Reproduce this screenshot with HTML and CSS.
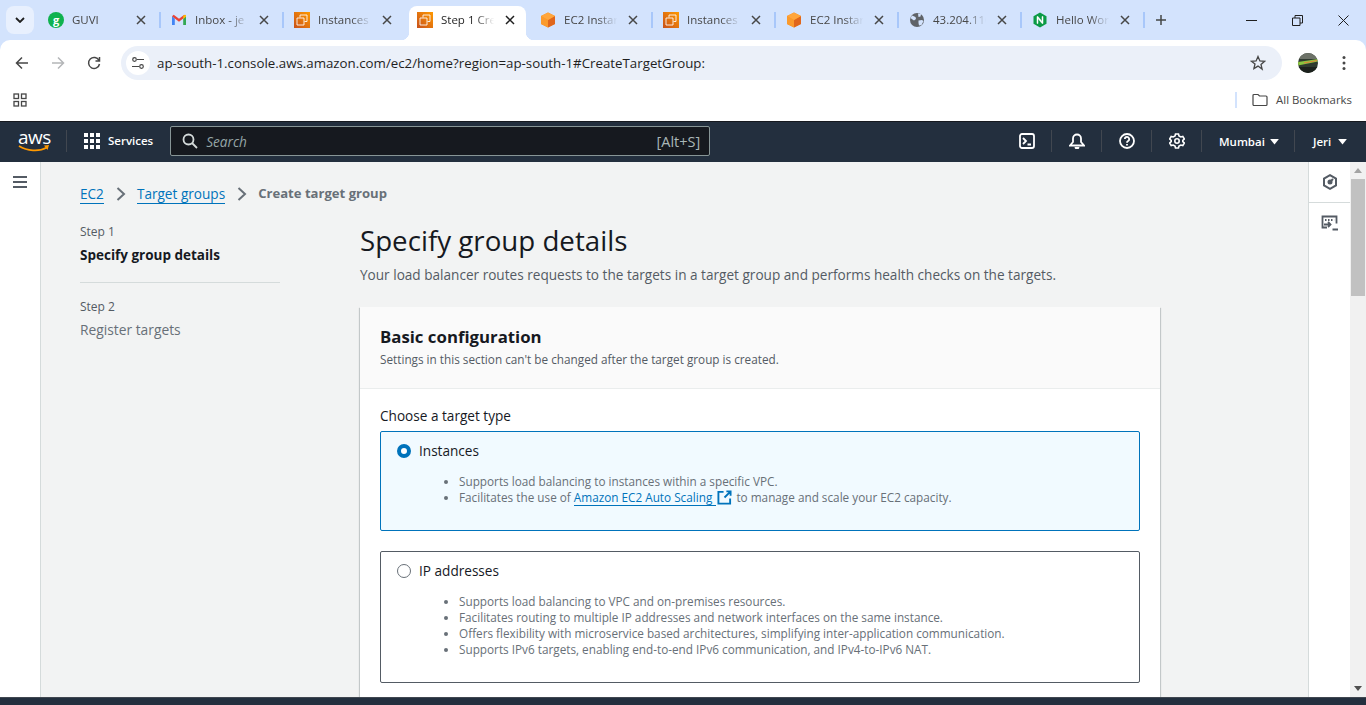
FILE: index.html
```html
<!DOCTYPE html>
<html lang="en">
<head>
    <meta charset="UTF-8">
    <title>Create target group | EC2</title>
    <link rel="stylesheet" href="styles.css">
</head>
<body>
    <svg class="defs" width="0" height="0">
        <symbol id="fav-ec2" viewBox="0 0 16 16">
            <defs><linearGradient id="ec2grad" x1="0" y1="1" x2="1" y2="0"><stop offset="0" stop-color="#c8511b"/><stop offset="1" stop-color="#f90"/></linearGradient></defs>
            <rect width="16" height="16" fill="url(#ec2grad)"/>
            <path d="M6 5.500V3h7v6.500h-2.500M3 6h7v7H3z" fill="none" stroke="#fff" stroke-opacity=".85" stroke-width="1"/>
        </symbol>
        <symbol id="fav-cube" viewBox="0 0 16 16">
            <path d="M8 .5 15 4v8l-7 3.500L1 12V4z" fill="#f58b1f"/>
            <path d="M8 8v7.500L1 12V4z" fill="#fb9a2c"/>
            <path d="M8 8v7.500l7-3.500V4z" fill="#e0661c"/>
            <path d="M8 .5 15 4 8 8 1 4z" fill="#ffa63d"/>
        </symbol>
        <symbol id="icon-close" viewBox="0 0 10 10">
            <path d="M1 1l8 8M9 1 1 9" fill="none" stroke="currentColor" stroke-width="1.500"/>
        </symbol>
        <symbol id="caret" viewBox="0 0 10 8">
            <path d="M0 1h10L5 7.500z" fill="currentColor"/>
        </symbol>
        <symbol id="crumb" viewBox="0 0 10 16">
            <path d="M1.500 2 8 8l-6.500 6" fill="none" stroke="currentColor" stroke-width="2"/>
        </symbol>
    </svg>

    <div class="tabstrip">
        <div class="tab-search">
            <svg width="10" height="6" viewBox="0 0 10 6"><path d="M1 1l4 4 4-4" fill="none" stroke="#1f1f1f" stroke-width="1.800"/></svg>
        </div>
        <div class="tab">
            <svg class="fav" viewBox="0 0 16 16"><circle cx="8" cy="8" r="8" fill="#0fb24f"/><text x="8" y="11.500" class="fav-letter">g</text></svg>
            <span class="tab-title">GUVI</span>
            <svg class="tab-close"><use href="#icon-close"/></svg>
        </div>
        <div class="tab">
            <svg class="fav" viewBox="0 0 16 16">
                <path d="M1 4v9h2.800V6.500z" fill="#4285f4"/>
                <path d="M15 4v9h-2.800V6.500z" fill="#34a853"/>
                <path d="M1 4.200 2.700 2.700 8 6.700l5.300-4L15 4.200 8 9.700z" fill="#ea4335"/>
                <path d="M12.200 3.500 15 2.700v2L12.200 7z" fill="#fbbc04"/>
            </svg>
            <span class="tab-title">Inbox - je</span>
            <svg class="tab-close"><use href="#icon-close"/></svg>
        </div>
        <div class="tab">
            <svg class="fav"><use href="#fav-ec2"/></svg>
            <span class="tab-title">Instances</span>
            <svg class="tab-close"><use href="#icon-close"/></svg>
        </div>
        <div class="tab active">
            <svg class="fav"><use href="#fav-ec2"/></svg>
            <span class="tab-title">Step 1 Cre</span>
            <svg class="tab-close"><use href="#icon-close"/></svg>
        </div>
        <div class="tab">
            <svg class="fav"><use href="#fav-cube"/></svg>
            <span class="tab-title">EC2 Instar</span>
            <svg class="tab-close"><use href="#icon-close"/></svg>
        </div>
        <div class="tab">
            <svg class="fav"><use href="#fav-ec2"/></svg>
            <span class="tab-title">Instances</span>
            <svg class="tab-close"><use href="#icon-close"/></svg>
        </div>
        <div class="tab">
            <svg class="fav"><use href="#fav-cube"/></svg>
            <span class="tab-title">EC2 Instar</span>
            <svg class="tab-close"><use href="#icon-close"/></svg>
        </div>
        <div class="tab">
            <svg class="fav" viewBox="0 0 16 16">
                <circle cx="8" cy="8" r="7" fill="#5f6368"/>
                <path d="M3 3.500 6.500 5 7 7 5 8.500 3.500 7.500 1.500 6zM9 1.500l3 .5-.5 2.500L9.500 5zM9.500 8.500l3.500-.5 1.500 1-2 4-2.500.5-.5-2.500z" fill="#d3e3fd"/>
            </svg>
            <span class="tab-title">43.204.110</span>
            <svg class="tab-close"><use href="#icon-close"/></svg>
        </div>
        <div class="tab">
            <svg class="fav" viewBox="0 0 16 16">
                <path d="M8 .5 14.500 4.200v7.600L8 15.500 1.500 11.800V4.200z" fill="#0b9a45"/>
                <path d="M5 11.500v-7h1l4 5v-5h1v7h-1l-4-5v5z" fill="#fff" stroke="#fff" stroke-width=".5"/>
            </svg>
            <span class="tab-title">Hello Wor</span>
            <svg class="tab-close"><use href="#icon-close"/></svg>
        </div>
        <div class="tab-new">
            <svg width="12" height="12" viewBox="0 0 12 12"><path d="M6 1v10M1 6h10" stroke="#444746" stroke-width="1.500"/></svg>
        </div>
        <div class="win-controls">
            <svg width="11" height="11" viewBox="0 0 11 11"><path d="M0 5.500h11" stroke="#1f1f1f"/></svg>
            <svg width="11" height="11" viewBox="0 0 11 11"><path d="M.5 3h7.500v7.500H.5zM3 3V.5h7.500V8H8" fill="none" stroke="#1f1f1f"/></svg>
            <svg width="11" height="11" viewBox="0 0 11 11"><path d="M.5.5l10 10M10.500.5l-10 10" stroke="#1f1f1f"/></svg>
        </div>
    </div>

    <div class="toolbar">
        <svg class="tool-icon" viewBox="0 0 14 14"><path d="M13 7H2M7 1.500 1.500 7 7 12.500" fill="none" stroke="#474747" stroke-width="1.500"/></svg>
        <svg class="tool-icon" viewBox="0 0 14 14"><path d="M1 7h11M7 1.500 12.500 7 7 12.500" fill="none" stroke="#b4b6b8" stroke-width="1.500"/></svg>
        <svg class="tool-icon" viewBox="0 0 14 14"><path d="M12 4.500A5.500 5.500 0 1 0 12.500 8M12.500 1v4h-4" fill="none" stroke="#474747" stroke-width="1.500"/></svg>
        <div class="omnibox">
            <span class="site-chip">
                <svg width="14" height="12" viewBox="0 0 14 12"><circle cx="3.500" cy="2.500" r="1.800" fill="none" stroke="#474747" stroke-width="1.200"/><path d="M6 2.500h7M1 9.500h7" stroke="#474747" stroke-width="1.200"/><circle cx="10.500" cy="9.500" r="1.800" fill="none" stroke="#474747" stroke-width="1.200"/></svg>
            </span>
            <span class="url">ap-south-1.console.aws.amazon.com/ec2/home?region=ap-south-1#CreateTargetGroup:</span>
            <svg class="star" width="16" height="16" viewBox="0 0 16 16"><path d="M8 1.500l1.900 4.400 4.700.4-3.600 3.100 1.100 4.700L8 11.100l-4.100 2.500L5 8.900 1.400 6.300l4.700-.4z" fill="none" stroke="#474747" stroke-width="1.300"/></svg>
        </div>
        <svg class="avatar" viewBox="0 0 20 20">
            <defs><clipPath id="avatar-clip"><circle cx="10" cy="10" r="10"/></clipPath></defs>
            <g clip-path="url(#avatar-clip)">
                <rect width="20" height="20" fill="#2f3a30"/>
                <rect width="20" height="6" fill="#6d7268"/>
                <path d="M0 9 20 6v2.500L0 12.500z" fill="#8bc53f"/>
                <path d="M6 10l13-2.500" stroke="#e0803a"/>
                <rect y="14" width="20" height="6" fill="#1c211d"/>
            </g>
        </svg>
        <svg class="dots" width="4" height="16" viewBox="0 0 4 16"><circle cx="2" cy="2.500" r="1.500" fill="#474747"/><circle cx="2" cy="8" r="1.500" fill="#474747"/><circle cx="2" cy="13.500" r="1.500" fill="#474747"/></svg>
    </div>

    <div class="bookmarks">
        <svg width="14" height="14" viewBox="0 0 14 14" fill="none" stroke="#474747" stroke-width="1.300"><rect x="1" y="1" width="4.500" height="4.500"/><rect x="8.500" y="1" width="4.500" height="4.500"/><rect x="1" y="8.500" width="4.500" height="4.500"/><rect x="8.500" y="8.500" width="4.500" height="4.500"/></svg>
        <span class="bm-line"></span>
        <svg width="16" height="14" viewBox="0 0 16 14"><path d="M1 2.500A1 1 0 0 1 2 1.500h4L7.500 3H14a1 1 0 0 1 1 1v7.500a1 1 0 0 1-1 1H2a1 1 0 0 1-1-1z" fill="none" stroke="#474747" stroke-width="1.200"/></svg>
        <span class="bm-label">All Bookmarks</span>
    </div>

    <nav class="awsnav">
        <span class="aws-logo">
            <span class="aws-word">aws</span>
            <svg width="32" height="8" viewBox="0 0 32 8"><path d="M1 1c8 5 20 6 28 1.500" fill="none" stroke="#f90" stroke-width="1.800"/><path d="M26 .5l5-.5-1.500 5z" fill="#f90"/></svg>
        </span>
        <span class="nav-line"></span>
        <span class="services">
            <svg width="16" height="16" viewBox="0 0 16 16" fill="#fff">
                <rect width="4" height="4"/><rect x="6" width="4" height="4"/><rect x="12" width="4" height="4"/>
                <rect y="6" width="4" height="4"/><rect x="6" y="6" width="4" height="4"/><rect x="12" y="6" width="4" height="4"/>
                <rect y="12" width="4" height="4"/><rect x="6" y="12" width="4" height="4"/><rect x="12" y="12" width="4" height="4"/>
            </svg>
            Services
        </span>
        <div class="nav-search">
            <svg width="16" height="16" viewBox="0 0 16 16"><circle cx="6.500" cy="6.500" r="5" fill="none" stroke="#d5dbdb" stroke-width="1.800"/><path d="M10 10l5 5" stroke="#d5dbdb" stroke-width="1.800"/></svg>
            <span class="search-hint">Search</span>
            <span class="search-key">[Alt+S]</span>
        </div>
        <div class="nav-right">
            <span class="nav-btn">
                <svg width="16" height="16" viewBox="0 0 16 16" fill="none" stroke="#fff" stroke-width="1.800"><rect x="1" y="1" width="14" height="14" rx="2"/><path d="M4 5l3 3-3 3M8.500 11.500H12"/></svg>
            </span>
            <span class="nav-btn">
                <svg width="16" height="16" viewBox="0 0 16 16" fill="none" stroke="#fff" stroke-width="1.800"><path d="M1 12.500 4 9V5.500a4 4 0 0 1 8 0V9l3 3.500z"/><path d="M6.500 14a1.500 1.500 0 0 0 3 0" fill="#fff"/></svg>
            </span>
            <span class="nav-btn">
                <svg width="16" height="16" viewBox="0 0 16 16" fill="none" stroke="#fff" stroke-width="1.800"><circle cx="8" cy="8" r="7"/><path d="M5.800 6a2.200 2.200 0 1 1 3.300 2c-.8.500-1.100.9-1.100 1.800M8 11v1.500"/></svg>
            </span>
            <span class="nav-btn">
                <svg width="16" height="16" viewBox="0 0 16 16" fill="none" stroke="#fff" stroke-width="1.600"><path d="M6.500 1h3l.5 2 1.800 1 2-.6 1.500 2.600-1.500 1.400v1.200l1.500 1.400-1.500 2.600-2-.6-1.800 1-.5 2h-3l-.5-2-1.800-1-2 .6L.7 10.000l1.500-1.400V7.400L.7 6l1.500-2.600 2 .6L6 3z"/><circle cx="8" cy="8" r="2.200"/></svg>
            </span>
            <span class="nav-menu region">Mumbai <svg class="nav-caret"><use href="#caret"/></svg></span>
            <span class="nav-menu user">Jeri <svg class="nav-caret"><use href="#caret"/></svg></span>
        </div>
    </nav>

    <div class="console">
        <aside class="side-nav">
            <svg width="14" height="12" viewBox="0 0 14 12"><path d="M0 1h14M0 6h14M0 11h14" stroke="#545b64" stroke-width="2"/></svg>
        </aside>

        <main class="content">
            <div class="breadcrumbs">
                <a href="#">EC2</a>
                <svg class="crumb-sep"><use href="#crumb"/></svg>
                <a href="#">Target groups</a>
                <svg class="crumb-sep"><use href="#crumb"/></svg>
                <span class="crumb-current">Create target group</span>
            </div>

            <div class="wizard">
                <ul class="steps">
                    <li class="step step-first">
                        <small>Step 1</small>
                        <strong>Specify group details</strong>
                    </li>
                    <li class="step">
                        <small>Step 2</small>
                        <span class="step-off">Register targets</span>
                    </li>
                </ul>

                <div class="form-col">
                    <h1>Specify group details</h1>
                    <p class="lead">Your load balancer routes requests to the targets in a target group and performs health checks on the targets.</p>

                    <section class="card">
                        <header class="card-head">
                            <h2>Basic configuration</h2>
                            <p>Settings in this section can't be changed after the target group is created.</p>
                        </header>
                        <div class="card-body">
                            <div class="field-label">Choose a target type</div>

                            <div class="tile selected">
                                <div class="tile-title"><span class="radio on"></span>Instances</div>
                                <ul class="tile-list">
                                    <li>Supports load balancing to instances within a specific VPC.</li>
                                    <li>Facilitates the use of <a href="#">Amazon EC2 Auto Scaling </a><svg class="ext" viewBox="0 0 16 16"><path d="M7 2H1.500v12.500H14V9M10 1.500h4.500V6M14 2 8 8" fill="none" stroke="#0073bb" stroke-width="2"/></svg> to manage and scale your EC2 capacity.</li>
                                </ul>
                            </div>

                            <div class="tile tile-ip">
                                <div class="tile-title"><span class="radio"></span>IP addresses</div>
                                <ul class="tile-list">
                                    <li>Supports load balancing to VPC and on-premises resources.</li>
                                    <li>Facilitates routing to multiple IP addresses and network interfaces on the same instance.</li>
                                    <li>Offers flexibility with microservice based architectures, simplifying inter-application communication.</li>
                                    <li>Supports IPv6 targets, enabling end-to-end IPv6 communication, and IPv4-to-IPv6 NAT.</li>
                                </ul>
                            </div>
                        </div>
                    </section>
                </div>
            </div>
        </main>

        <aside class="side-rail">
            <div class="rail-item">
                <svg width="16" height="16" viewBox="0 0 16 16" fill="none" stroke="#545b64" stroke-width="2"><path d="M8 1.200 14 4.600v6.800L8 14.800 2 11.400V4.600z"/><circle cx="8" cy="8" r="1.500" fill="#545b64"/><path d="M8 8l3-3"/></svg>
            </div>
            <div class="rail-item">
                <svg width="18" height="18" viewBox="0 0 18 18" fill="none" stroke="#545b64" stroke-width="1.800"><path d="M6 12.500H1.500V1.500h14v7"/><path d="M4 5h1.500M7 5h1.500M10 5h1.500M13 5h.1" stroke-width="2"/><path d="M3 9.500h6M7 7l2.500 2.500L7 12M11.500 14.500H17"/></svg>
            </div>
        </aside>

        <div class="scrollbar">
            <svg width="8" height="5" viewBox="0 0 8 5"><path d="M0 5h8L4 0z" fill="#a3a3a3"/></svg>
            <div class="thumb"></div>
            <svg class="scroll-down" width="8" height="5" viewBox="0 0 8 5"><path d="M0 0h8L4 5z" fill="#505050"/></svg>
        </div>
    </div>

    <div class="console-foot"></div>
</body>
</html>
```

FILE: styles.css
```css
* {
    box-sizing: border-box;
}
html, body {
    margin: 0;
    height: 705px;
    overflow: hidden;
}
body {
    display: flex;
    flex-direction: column;
    font-family: "Open Sans", Arial, sans-serif;
    background: #d3e3fd;
    color: #16191f;
}
svg {
    flex: none;
}
.defs {
    position: absolute;
}

/* browser chrome */
.tabstrip {
    height: 40px;
    flex: none;
    display: flex;
    background: #d3e3fd;
    padding-left: 37px;
    position: relative;
}
.tab-search {
    position: absolute;
    left: 6px;
    top: 6px;
    width: 28px;
    height: 28px;
    border-radius: 8px;
    background: #e8f0fe;
    display: flex;
    align-items: center;
    justify-content: center;
}
.tab {
    width: 123px;
    height: 40px;
    flex: none;
    display: flex;
    align-items: center;
    padding-left: 11px;
    position: relative;
    font-size: 11.5px;
    color: #474747;
}
.tab::after {
    content: "";
    position: absolute;
    right: -1px;
    top: 12px;
    height: 16px;
    width: 2px;
    background: #a8c7fa;
}
.tab:nth-child(4)::after {
    display: none;
}
.tab.active {
    background: #fff;
    margin: 6px 3px 0;
    width: 117px;
    height: 34px;
    padding: 0 0 6px 8px;
    border-radius: 8px 8px 0 0;
    color: #1f1f1f;
}
.tab.active::before,
.tab.active::after {
    content: "";
    position: absolute;
    top: auto;
    bottom: 0;
    width: 8px;
    height: 8px;
}
.tab.active::before {
    left: -8px;
    background: radial-gradient(circle at 0 0, transparent 8px, #fff 8.500px);
}
.tab.active::after {
    right: -8px;
    background: radial-gradient(circle at 100% 0, transparent 8px, #fff 8.500px);
}
.fav {
    width: 16px;
    height: 16px;
    margin-right: 8px;
}
.fav-letter {
    font-size: 11px;
    font-weight: 700;
    fill: #fff;
    text-anchor: middle;
}
.tab-title {
    width: 58px;
    white-space: nowrap;
    overflow: hidden;
    padding-bottom: 1px;
    -webkit-mask-image: linear-gradient(to right, #000 58%, transparent 92%);
    mask-image: linear-gradient(to right, #000 58%, transparent 92%);
}
.tab-close {
    width: 10px;
    height: 10px;
    margin-left: 6px;
    color: #474747;
}
.tab.active .tab-close {
    color: #1f1f1f;
}
.tab-new {
    width: 34px;
    display: flex;
    align-items: center;
    justify-content: center;
}
.win-controls {
    margin-left: auto;
    display: flex;
    align-items: center;
    gap: 35px;
    padding-right: 17px;
}
.toolbar {
    height: 40px;
    flex: none;
    display: flex;
    align-items: center;
    background: #fff;
    padding-left: 15px;
    border-radius: 10px 10px 0 0;
}
.tool-icon {
    width: 14px;
    height: 14px;
    margin: 6px 22px 0 0;
}
.omnibox {
    width: 1161px;
    height: 34px;
    margin: 6px 0 0 -2px;
    border-radius: 17px;
    background: #ebf0f9;
    display: flex;
    align-items: center;
    padding-left: 5px;
}
.site-chip {
    width: 24px;
    height: 24px;
    border-radius: 50%;
    background: #fff;
    display: flex;
    align-items: center;
    justify-content: center;
}
.url {
    margin-left: 7px;
    font-size: 13.3px;
    color: #1f1f1f;
    white-space: nowrap;
}
.star {
    margin-left: auto;
    margin-right: 16px;
}
.avatar {
    width: 20px;
    height: 20px;
    margin: 6px 0 0 16px;
}
.dots {
    margin: 6px 0 0 24px;
}
.bookmarks {
    height: 41px;
    flex: none;
    display: flex;
    align-items: center;
    padding: 0 14px 2px 13px;
    background: #fff;
    font-size: 11.4px;
    color: #474747;
}
.bm-line {
    margin-left: auto;
    width: 2px;
    height: 16px;
    background: #d3e3fd;
    margin-right: 15px;
}
.bm-label {
    margin-left: 8px;
}

/* aws top nav */
.awsnav {
    height: 41px;
    flex: none;
    display: flex;
    align-items: center;
    background: #232f3e;
    border-top: 1px solid #16191f;
    padding-bottom: 2px;
    color: #fff;
    font-size: 11.5px;
    font-weight: 600;
}
.aws-logo {
    width: 66px;
    padding-left: 18px;
    display: flex;
    flex-direction: column;
}
.aws-word {
    font-size: 19px;
    line-height: 15px;
    font-weight: 400;
    letter-spacing: -.5px;
}
.nav-line {
    width: 1px;
    height: 22px;
    background: #414750;
}
.services {
    display: flex;
    align-items: center;
    gap: 8px;
    margin-left: 17px;
    padding-bottom: 1px;
}
.nav-search {
    margin-left: 17px;
    width: 540px;
    height: 30px;
    border: 1px solid #879596;
    border-radius: 2px;
    background: #16191f;
    display: flex;
    align-items: center;
    padding: 0 9px 0 11px;
    font-weight: 400;
}
.search-hint {
    margin-left: 8px;
    font-size: 13.6px;
    font-style: italic;
    color: #95a5a6;
}
.search-key {
    margin-left: auto;
    font-size: 14.5px;
    color: #aab7b8;
}
.nav-right {
    margin-left: auto;
    display: flex;
    align-items: center;
    height: 24px;
}
.nav-btn {
    width: 50px;
    height: 22px;
    display: flex;
    align-items: center;
    justify-content: center;
    border-right: 1px solid #414750;
}
.nav-menu {
    display: flex;
    align-items: center;
    gap: 7px;
    height: 22px;
    padding-left: 17px;
}
.region {
    width: 93px;
    gap: 5px;
    border-right: 1px solid #414750;
}
.user {
    width: 71px;
    padding-left: 18px;
}
.nav-caret {
    width: 9px;
    height: 7px;
}

/* console body */
.console {
    flex: 1;
    min-height: 0;
    display: flex;
    overflow: hidden;
}
.side-nav {
    width: 41px;
    flex: none;
    background: #fff;
    border-right: 1px solid #d5dbdb;
    padding: 14px 0 0 13px;
}
.side-nav svg {
    display: block;
}
.content {
    flex: 1;
    min-width: 0;
    background: #f2f3f3;
    padding: 22px 0 0 39px;
    overflow: hidden;
}
.breadcrumbs {
    display: flex;
    align-items: center;
    font-size: 13.6px;
    line-height: 19px;
    height: 19px;
}
.breadcrumbs a {
    color: #0073bb;
    text-decoration: none;
    border-bottom: 1px solid #0073bb;
}
.crumb-sep {
    width: 10px;
    height: 16px;
    margin: 0 11px 0 12px;
    color: #687078;
}
.crumb-current {
    color: #687078;
    font-weight: 700;
    font-size: 13.1px;
}
.wizard {
    display: flex;
    margin-top: 19px;
}
.steps {
    list-style: none;
    margin: 0 80px 0 0;
    padding: 0;
    width: 200px;
    flex: none;
}
.step {
    display: flex;
    flex-direction: column;
}
.step small {
    font-size: 12px;
    line-height: 16px;
    color: #545b64;
}
.step strong {
    font-size: 13.5px;
    line-height: 19px;
    margin-top: 6px;
    font-weight: 700;
}
.step-first {
    padding: 2px 0 17px;
    border-bottom: 1px solid #d5dbdb;
    margin-bottom: 16px;
}
.step-off {
    font-size: 13.8px;
    line-height: 19px;
    margin-top: 5px;
    color: #687078;
}
.form-col {
    width: 800px;
    flex: none;
}
h1 {
    margin: 0;
    font-size: 27.7px;
    line-height: 36px;
    font-weight: 400;
}
.lead {
    margin: 7px 0 0;
    font-size: 13.6px;
    line-height: 20px;
    color: #545b64;
}
.card {
    margin-top: 22px;
    background: #fff;
    box-shadow: 0 1px 1px 0 rgba(0, 28, 36, .3), 1px 1px 1px 0 rgba(0, 28, 36, .15), -1px 1px 1px 0 rgba(0, 28, 36, .15);
}
.card-head {
    height: 82px;
    padding: 19px 20px 0;
    background: #fafafa;
    border-bottom: 1px solid #eaeded;
}
h2 {
    margin: 0;
    font-size: 16.8px;
    line-height: 22px;
    font-weight: 700;
}
.card-head p {
    margin: 3px 0 0;
    font-size: 11.75px;
    line-height: 16px;
    color: #545b64;
}
.card-body {
    padding: 17px 20px 20px;
}
.field-label {
    font-size: 13.6px;
    line-height: 19px;
    margin-bottom: 6px;
}
.tile {
    border: 1px solid #545b64;
    border-radius: 2px;
    height: 100px;
    padding: 9px 16px;
    margin-bottom: 20px;
}
.tile.selected {
    border-color: #0073bb;
    background: #f1faff;
}
.tile-ip {
    height: 132px;
}
.tile-title {
    display: flex;
    align-items: center;
    gap: 8px;
    font-size: 13.6px;
    line-height: 19px;
}
.radio {
    width: 14px;
    height: 14px;
    border-radius: 50%;
    border: 1px solid #687078;
    background: #fff;
}
.radio.on {
    border: 4px solid #0073bb;
}
.tile-list {
    margin: 13px 0 0;
    padding-left: 62px;
    font-size: 11.75px;
    line-height: 16px;
    color: #687078;
}
.tile-list a {
    color: #0073bb;
    text-decoration: none;
    border-bottom: 1px solid #0073bb;
    padding-right: 1px;
}
.ext {
    width: 15px;
    height: 15px;
    margin: 0 1px;
    vertical-align: -3px;
}
.side-rail {
    width: 42px;
    flex: none;
    background: #fff;
    border-left: 1px solid #d5dbdb;
}
.rail-item {
    height: 42px;
    display: flex;
    align-items: center;
    justify-content: center;
}
.rail-item:first-child {
    height: 41px;
    border-bottom: 1px solid #d5dbdb;
}
.scrollbar {
    width: 16px;
    flex: none;
    background: #f1f1f1;
    display: flex;
    flex-direction: column;
    align-items: center;
    padding: 6px 0;
}
.thumb {
    width: 14px;
    height: 117px;
    background: #c1c1c1;
    margin-top: 6px;
}
.scroll-down {
    margin-top: auto;
}
.console-foot {
    height: 8px;
    flex: none;
    background: #232f3e;
    border-top: 1px solid #414750;
}
```
